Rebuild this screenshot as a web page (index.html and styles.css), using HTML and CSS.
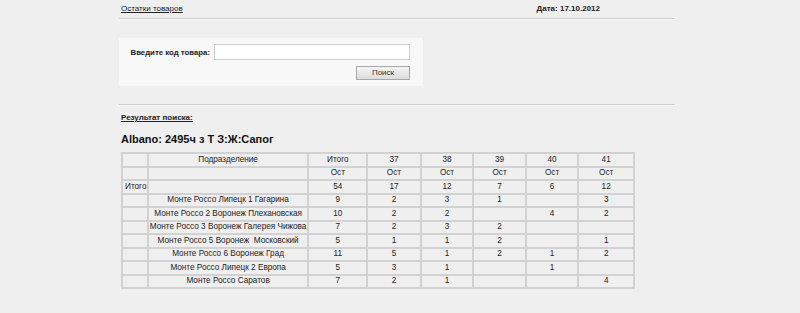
FILE: index.html
```html
<!DOCTYPE html>
<html>
<head>
<meta charset="utf-8">
<link rel="stylesheet" href="styles.css">
</head>
<body>
<div class="page">
  <div class="topbar">
    <a class="title-link" href="#">Остатки товаров</a>
    <span class="date">Дата: 17.10.2012</span>
  </div>
  <div class="rule"></div>
  <div class="search-panel">
    <div class="search-row">
      <label class="search-label">Введите код товара:</label>
      <input class="search-input" type="text">
    </div>
    <div class="button-row">
      <button class="search-btn">Поиск</button>
    </div>
  </div>
  <div class="rule rule-second"></div>
  <div class="result-label">Результат поиска:</div>
  <h2 class="product">Albano: 2495ч з Т З:Ж:Сапог</h2>
  <table class="stock">
    <colgroup>
      <col style="width:25px"><col style="width:156px"><col style="width:57px"><col style="width:52px"><col style="width:51px"><col style="width:51px"><col style="width:51px"><col style="width:54px">
    </colgroup>
    <tr><td></td><td>Подразделение</td><td>Итого</td><td>37</td><td>38</td><td>39</td><td>40</td><td>41</td></tr>
    <tr><td></td><td></td><td>Ост</td><td>Ост</td><td>Ост</td><td>Ост</td><td>Ост</td><td>Ост</td></tr>
    <tr><td class="left">Итого</td><td></td><td>54</td><td>17</td><td>12</td><td>7</td><td>6</td><td>12</td></tr>
    <tr><td></td><td>Монте Россо Липецк 1 Гагарина</td><td>9</td><td>2</td><td>3</td><td>1</td><td></td><td>3</td></tr>
    <tr><td></td><td>Монте Россо 2 Воронеж Плехановская</td><td>10</td><td>2</td><td>2</td><td></td><td>4</td><td>2</td></tr>
    <tr><td></td><td>Монте Россо 3 Воронеж Галерея Чижова</td><td>7</td><td>2</td><td>3</td><td>2</td><td></td><td></td></tr>
    <tr><td></td><td>Монте Россо 5 Воронеж&nbsp; Московский</td><td>5</td><td>1</td><td>1</td><td>2</td><td></td><td>1</td></tr>
    <tr><td></td><td>Монте Россо 6 Воронеж Град</td><td>11</td><td>5</td><td>1</td><td>2</td><td>1</td><td>2</td></tr>
    <tr><td></td><td>Монте Россо Липецк 2 Европа</td><td>5</td><td>3</td><td>1</td><td></td><td>1</td><td></td></tr>
    <tr><td></td><td>Монте Россо Саратов</td><td>7</td><td>2</td><td>1</td><td></td><td></td><td>4</td></tr>
  </table>
</div>
</body>
</html>
```

FILE: styles.css
```css
html, body {
  margin: 0;
  padding: 0;
  background: #efefef;
}
body {
  font-family: "Liberation Sans", Arial, sans-serif;
  font-size: 8px;
  color: #222;
}
.page {
  width: 556px;
  margin-left: 119px;
}
.topbar {
  display: flex;
  justify-content: space-between;
  height: 18px;
  padding-left: 2px;
  padding-top: 4px;
  box-sizing: border-box;
  line-height: 10px;
}
.title-link {
  color: #222;
  text-decoration: underline;
}
.date {
  font-weight: bold;
  margin-right: 75px;
  color: #222;
}
.rule {
  height: 0;
  border-top: 1px solid #cfcfcf;
  border-bottom: 1px solid #f8f8f8;
}
.search-panel {
  margin-top: 18px;
  width: 304px;
  height: 48px;
  background: #f8f8f8;
  box-sizing: border-box;
  padding-top: 6px;
}
.search-row {
  display: flex;
  align-items: center;
  height: 16px;
}
.search-label {
  width: 91px;
  text-align: right;
  font-weight: bold;
  font-size: 7.8px;
  margin-right: 4px;
  color: #222;
}
.search-input {
  width: 196px;
  height: 16px;
  box-sizing: border-box;
  border: 1px solid #cfcfcf;
  background: #fff;
  margin: 0;
  padding: 0;
}
.button-row {
  display: flex;
  justify-content: flex-end;
  padding-right: 13px;
  margin-top: 6px;
}
.search-btn {
  width: 54px;
  height: 14px;
  margin: 0;
  padding: 0;
  font-family: "Liberation Sans", Arial, sans-serif;
  font-size: 8px;
  line-height: 12px;
  color: #333;
  border: 1px solid #a8a8a8;
  background: linear-gradient(#f4f4f4, #dcdcdc);
}
.rule-second {
  margin-top: 18px;
}
.result-label {
  margin-top: 7px;
  padding-left: 2px;
  font-weight: bold;
  text-decoration: underline;
  line-height: 10px;
}
.product {
  margin: 10px 0 0 2px;
  font-size: 11px;
  font-weight: bold;
  line-height: 13px;
  color: #111;
}
.stock {
  margin: 6px 0 0 2px;
  border-collapse: separate;
  border-spacing: 0;
  border: 1px solid #d2d2d2;
  table-layout: fixed;
  width: 514px;
}
.stock td {
  border: 1px solid #d2d2d2;
  padding: 0;
  height: 11.5px;
  line-height: 10px;
  font-size: 8.2px;
  text-align: center;
  color: #222;
  white-space: nowrap;
  overflow: hidden;
}
.stock td.left {
  text-align: left;
  padding-left: 2px;
}
```
